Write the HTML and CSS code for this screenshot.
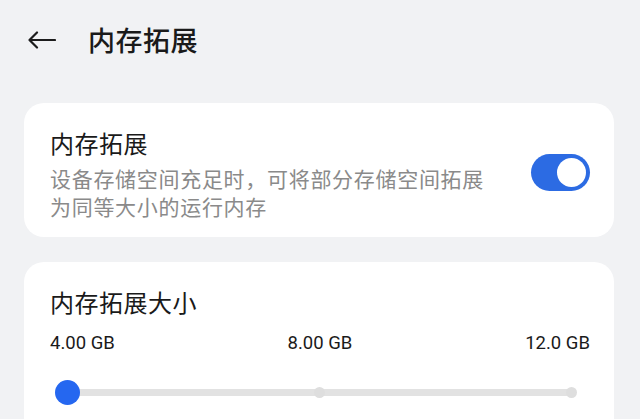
FILE: index.html
```html
<!DOCTYPE html>
<html lang="zh">
<head>
<meta charset="utf-8">
<link rel="stylesheet" href="styles.css">
</head>
<body>
<header class="header">
  <svg class="back" width="28" height="18" viewBox="0 0 28 18"><path d="M1.5 9H27M9 1.5L1.5 9L9 16.5" fill="none" stroke="#1c1c1c" stroke-width="2.2" stroke-linecap="round" stroke-linejoin="round"/></svg>
  <h1 class="title">内存拓展</h1>
</header>
<main class="cards">
  <section class="card card-switch">
    <div class="text">
      <div class="card-title">内存拓展</div>
      <div class="desc">设备存储空间充足时，可将部分存储空间拓展为同等大小的运行内存</div>
    </div>
    <div class="toggle"><div class="knob"></div></div>
  </section>
  <section class="card card-slider">
    <div class="card-title">内存拓展大小</div>
    <div class="labels">
      <span>4.00 GB</span>
      <span>8.00 GB</span>
      <span>12.0 GB</span>
    </div>
    <div class="slider">
      <div class="track"></div>
      <div class="tick tick-mid"></div>
      <div class="tick tick-end"></div>
      <div class="thumb"></div>
    </div>
  </section>
</main>
</body>
</html>
```
FILE: styles.css
```css
* { box-sizing: border-box; }
html, body { margin: 0; padding: 0; }
body {
  background: #f1f2f4;
  font-family: "Noto Sans CJK SC", "Noto Sans", sans-serif;
  color: #1a1a1a;
  width: 640px;
  height: 419px;
  overflow: hidden;
}
.header {
  height: 80px;
  display: flex;
  align-items: center;
  padding-left: 28px;
}
.back { display: block; }
.title {
  margin: 0 0 0 32px;
  font-size: 27px;
  font-weight: 500;
  line-height: 34px;
  letter-spacing: 0.5px;
}
.cards {
  padding: 23px 26px 0 24px;
  display: flex;
  flex-direction: column;
  gap: 25px;
}
.card {
  background: #ffffff;
  border-radius: 20px;
}
.card-switch {
  display: flex;
  align-items: center;
  justify-content: space-between;
  padding: 24px 24px 17px 26px;
}
.text { width: 445px; }
.card-title {
  font-size: 24px;
  line-height: 32px;
  letter-spacing: 0.5px;
  font-weight: 400;
}
.desc {
  margin-top: 5px;
  font-size: 21px;
  line-height: 28px;
  letter-spacing: 0.7px;
  color: #8a8a8a;
}
.toggle {
  width: 59px;
  height: 37px;
  border-radius: 19px;
  background: #2c6be3;
  display: flex;
  align-items: center;
  justify-content: flex-end;
  padding-right: 4px;
  margin-bottom: 3px;
}
.knob {
  width: 29px;
  height: 29px;
  border-radius: 50%;
  background: #ffffff;
}
.card-slider {
  padding: 24px 24px 40px 26px;
}
.labels {
  margin-top: 13px;
  display: flex;
  justify-content: space-between;
  font-family: Roboto, "Noto Sans", sans-serif;
  font-size: 18.5px;
  line-height: 24px;
  color: #1a1a1a;
}
.slider {
  position: relative;
  margin: 25px 19px 0 17px;
  height: 24px;
  display: flex;
  align-items: center;
}
.track {
  flex: 1;
  height: 7px;
  border-radius: 4px;
  background: #e2e2e2;
}
.tick {
  position: absolute;
  top: 6.5px;
  width: 11px;
  height: 11px;
  margin-left: -5.5px;
  border-radius: 50%;
  background: #dedede;
}
.tick-mid { left: 50%; }
.tick-end { left: 100%; }
.thumb {
  position: absolute;
  left: -12.5px;
  top: 0;
  width: 25px;
  height: 25px;
  border-radius: 50%;
  background: #2567f0;
}
```
